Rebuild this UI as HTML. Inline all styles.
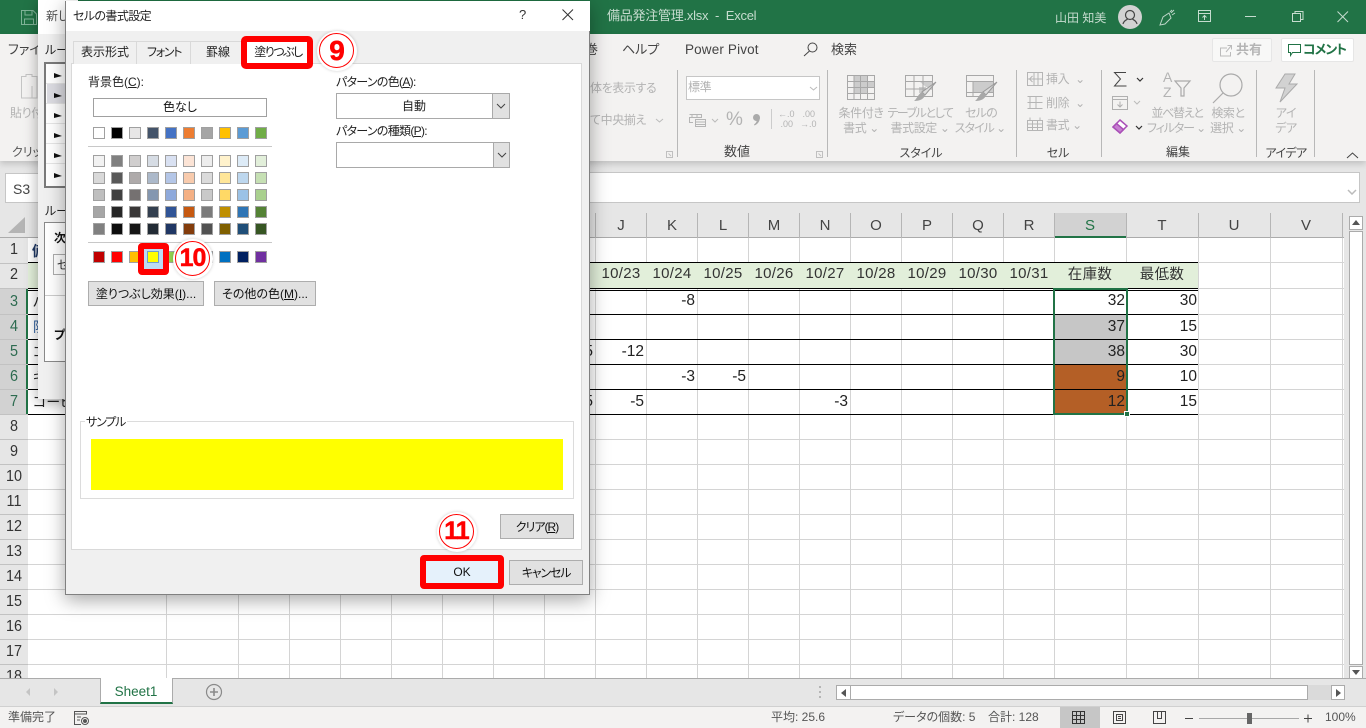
<!DOCTYPE html>
<html lang="ja"><head><meta charset="utf-8"><title>Excel</title>
<style>
html,body{margin:0;padding:0}
body{width:1366px;height:728px;overflow:hidden;position:relative;background:#e6e6e6;font-family:"Liberation Sans","Noto Sans CJK JP",sans-serif;font-feature-settings:"palt";color:#222}
div,svg,span{position:absolute}
.t{position:absolute;line-height:20px;white-space:nowrap;font-size:12px}
.c{transform:translateX(-50%)}
.g{color:#b3b3b3;letter-spacing:-.4px}
.l{color:#444}
.v{font-size:15.5px;color:#222;text-align:right;width:40px}
.h{font-size:15px;color:#333;transform:translateX(-50%);letter-spacing:.3px}
.n{font-size:16px;color:#333;transform:translateX(-50%) scaleX(.9)}
.cl{font-size:15px;color:#444;transform:translateX(-50%)}
.btn{background:#e1e1e1;border:1px solid #adadad;box-sizing:border-box;text-align:center;font-size:12px;color:#111}
.sw{left:93px;display:flex;height:12px}
.sw i{display:block;width:12px;height:12px;box-sizing:border-box;border:1px solid #a0a0a0;margin-right:6px;flex:none}
.circ{width:40px;height:40px;border-radius:50%;background:#fff;box-shadow:0 0 3px rgba(0,0,0,.2)}
.circ span{left:2px;top:2px;width:33px;height:33px;border:1.5px solid #f00;border-radius:50%;text-align:center;color:#f00;font-weight:bold;font-size:26px;line-height:33px;-webkit-text-stroke:.5px #f00;letter-spacing:-1px}
.sep{width:1px;background:#b8b8b8;top:70px;height:87px}
</style></head><body>

<!-- title bar -->
<div style="left:0;top:0;width:1366px;height:34px;background:#217346"></div>
<svg style="left:20px;top:9px" width="18" height="17" fill="none" stroke="#7fb397"><path d="M1.500 1.500H13L16.500 5V15.500H1.500Z M5 1.500V6H12V1.500 M4.500 15.500V10H13.500V15.500"/></svg>
<span class="t" style="left:607px;top:6px;color:#c6dccf;font-size:13px;letter-spacing:-.25px">備品発注管理.xlsx&nbsp; - &nbsp;Excel</span>
<span class="t" style="left:1055px;top:8px;color:#c6dccf;font-size:12px">山田 知美</span>
<svg style="left:1118px;top:5px" width="24" height="24" fill="none"><circle cx="12" cy="12" r="12" fill="#d2d2d2"/><circle cx="12" cy="10" r="4.500" stroke="#444" stroke-width="1.200"/><path d="M5 19C6 15 9 15 9.500 14M19 19C18 15 15 15 14.500 14" stroke="#444" stroke-width="1.200"/></svg>
<svg style="left:1159px;top:9px" width="17" height="18" fill="none" stroke="#bcd5c7"><path d="M1 16L4 8 10 4 12 9 6 15 1 16ZM11 3L13 1M13 6L16 4M12 4L15 1"/></svg>
<svg style="left:1198px;top:9px" width="14" height="14" fill="none" stroke="#c6dccf"><path d="M.5 1.500H12.500V12.500H.5ZM.5 4.500H12.500M6.500 11V6.500M4.500 8.500L6.500 6.500 8.500 8.500"/></svg>
<svg style="left:1245px;top:16px" width="12" height="2"><path d="M0 .5H11" stroke="#c6dccf"/></svg>
<svg style="left:1292px;top:11px" width="12" height="12" fill="none" stroke="#c6dccf"><path d="M.5 2.500H8.500V10.500H.5ZM3 2.500V.5H11V8.500H8.500"/></svg>
<svg style="left:1337px;top:11px" width="12" height="12" fill="none" stroke="#c6dccf"><path d="M.5 .5L11 11M11 .5L.5 11"/></svg>

<!-- ribbon -->
<div style="left:0;top:34px;width:1366px;height:127px;background:#f3f2f1;box-shadow:0 3px 6px rgba(0,0,0,.16)"></div>
<span class="t l" style="left:8px;top:40px;font-size:13px">ファイル</span>
<span class="t l" style="left:585px;top:40px;font-size:13px">巻</span>
<span class="t l" style="left:622px;top:40px;font-size:13px">ヘルプ</span>
<span class="t l" style="left:685px;top:40px;font-size:13.500px;letter-spacing:.15px">Power Pivot</span>
<svg style="left:803px;top:42px" width="15" height="15" fill="none" stroke="#444"><circle cx="9.500" cy="5.500" r="4.500"/><path d="M6.500 9L1 14"/></svg>
<span class="t l" style="left:831px;top:40px;font-size:13px">検索</span>
<div style="left:1212px;top:38px;width:60px;height:24px;box-sizing:border-box;background:#f8f8f7;border:1px solid #e6e6e6;border-radius:2px"></div>
<svg style="left:1219px;top:44px" width="14" height="13" fill="none" stroke="#bbb"><path d="M8 4H1.500V12H11.500V8M7 8L12 2M8.500 1.500H12.500V5.500"/></svg>
<span class="t" style="left:1236px;top:40px;color:#b5b5b5;font-size:13px;font-weight:bold">共有</span>
<div style="left:1281px;top:38px;width:73px;height:24px;box-sizing:border-box;background:#fff;border:1px solid #e6e6e6;border-radius:2px"></div>
<svg style="left:1288px;top:44px" width="14" height="13" fill="none" stroke="#217346"><path d="M.5 .5H12.500V8.500H4.500L2.500 11.500V8.500H.5Z"/></svg>
<span class="t" style="left:1303px;top:40px;color:#217346;font-size:13px;font-weight:bold;letter-spacing:-1px">コメント</span>

<!-- ribbon contents -->
<svg style="left:20px;top:72px" width="20" height="30" fill="none" stroke="#c4c4c4"><path d="M1.500 4.500H6V2.500H12V4.500H17V26H1.500ZM12 14V26"/></svg>
<span class="t g" style="left:10px;top:103px">貼り付け</span>
<span class="t" style="left:12px;top:142px;color:#555">クリップボード</span>
<span class="t g" style="left:590px;top:78px">体を表示する</span>
<span class="t g" style="left:590px;top:110px">て中央揃え</span>
<svg style="left:655px;top:118px" width="9" height="5" fill="none" stroke="#bbb"><path d="M1 1L4.500 4 8 1"/></svg>
<svg style="left:666px;top:151px" width="7" height="7" fill="none" stroke="#c0c0c0"><path d="M.5 .5H6.500V6.500H.5ZM2.500 2.500L5 5"/></svg>
<div class="sep" style="left:677px"></div>
<div style="left:686px;top:76px;width:134px;height:24px;box-sizing:border-box;background:#fff;border:1px solid #c6c6c6"></div>
<span class="t g" style="left:688px;top:77px;font-size:12px">標準</span>
<svg style="left:809px;top:86px" width="9" height="5" fill="none" stroke="#bbb"><path d="M1 1L4.500 4 8 1"/></svg>
<svg style="left:689px;top:113px" width="18" height="15" fill="none" stroke="#b5b5b5"><path d="M.5 1.500H12.500V4.500H.5V9.500H4M6.500 6.500H16.500V13.500H6.500ZM6.500 9H16.500M6.500 11.500H16.500M3 2V4M8 2V4"/></svg>
<svg style="left:711px;top:118px" width="8" height="5" fill="none" stroke="#bbb"><path d="M1 1L4 4 7 1"/></svg>
<span class="t g" style="left:726px;top:110px;font-size:19px;letter-spacing:0">%</span>
<svg style="left:752px;top:113px" width="9" height="14" fill="#aaa"><circle cx="4.500" cy="4.500" r="3.500"/><path d="M7.800 4.500C8 8 6 11 2.500 12.500L2 11.500C4 10 5 8.500 4.500 7Z"/></svg>
<div style="left:771px;top:109px;width:1px;height:20px;background:#ccc"></div>
<span class="t g" style="left:778px;top:109px;font-size:9px;line-height:10px;letter-spacing:0">←.0<br>&nbsp;.00</span>
<span class="t g" style="left:800px;top:109px;font-size:9px;line-height:10px;letter-spacing:0">&nbsp;.00<br>→.0</span>
<span class="t c" style="left:737px;top:142px;color:#444;font-size:13px">数値</span>
<svg style="left:816px;top:151px" width="7" height="7" fill="none" stroke="#c0c0c0"><path d="M.5 .5H6.500V6.500H.5ZM2.500 2.500L5 5"/></svg>
<div class="sep" style="left:827px"></div>

<svg style="left:847px;top:75px" width="29" height="27" fill="#ccc" stroke="#a8a8a8"><path d="M.5 .5H27.500V24.500H.5Z" fill="#f3f2f1"/><path d="M7 1H20V7H27V13H7ZM7 13H20V18H7Z" stroke="none"/><path d="M.5 6.500H27.500M.5 12.500H27.500M.5 18.500H27.500M7 1V24M13.500 1V24M20.500 1V24" fill="none"/></svg>
<svg style="left:905px;top:74px" width="33" height="29" fill="none" stroke="#a8a8a8"><path d="M14 7H27V13H14V19H21V13Z" fill="#ccc" stroke="none"/><path d="M.5 1.500H27.500V22.500H.5ZM.5 7.500H27.500M.5 15H27.500M9 2V22M18 2V22"/><path d="M31 8L20 21 17 18Z" fill="#ddd" stroke="#999"/><path d="M17 18L20 21C19 25 15 27 9 27 12 25 13 20 17 18Z" fill="#a8a8a8" stroke="none"/></svg>
<svg style="left:966px;top:74px" width="33" height="29" fill="none" stroke="#a8a8a8"><path d="M7 7H27V19H7Z" fill="#ccc" stroke="none"/><path d="M.5 1.500H27.500V22.500H.5ZM.5 7.500H27.500M.5 18.500H27.500M7 8V22"/><path d="M31 8L20 21 17 18Z" fill="#ddd" stroke="#999"/><path d="M17 18L20 21C19 25 15 27 9 27 12 25 13 20 17 18Z" fill="#a8a8a8" stroke="none"/></svg>
<span class="t g c" style="left:861px;top:103px">条件付き</span>
<span class="t g c" style="left:861px;top:118px">書式 ⌄</span>
<span class="t g c" style="left:920px;top:103px;letter-spacing:-1.400px">テーブルとして</span>
<span class="t g c" style="left:920px;top:118px">書式設定 ⌄</span>
<span class="t g c" style="left:981px;top:103px;letter-spacing:-.8px">セルの</span>
<span class="t g c" style="left:980px;top:118px;letter-spacing:-1px">スタイル ⌄</span>
<span class="t c" style="left:921px;top:143px;color:#444">スタイル</span>
<div class="sep" style="left:1016px"></div>

<svg style="left:1027px;top:72px" width="17" height="15" fill="none" stroke="#b5b5b5"><path d="M.5 .5H15.500V13.500H.5ZM7 .5V13.500M11 .5V13.500M.5 7H15.500M5.500 4L2.500 7 5.500 10"/></svg>
<svg style="left:1027px;top:95px" width="17" height="15" fill="none" stroke="#b5b5b5"><path d="M.5 1.500H15.500M.5 13.500H15.500M3 1.500V13.500M9 1.500V13.500M.5 7.500H15.500"/></svg>
<svg style="left:1027px;top:117px" width="17" height="15" fill="none" stroke="#b5b5b5"><path d="M.5 3.500H15.500V13.500H.5ZM.5 7H15.500M.5 10.500H15.500M5.500 3.500V13.500M10.500 3.500V13.500M3 3.500V.5M13 3.500V.5"/></svg>
<span class="t g" style="left:1046px;top:69px">挿入 &nbsp;⌄</span>
<span class="t g" style="left:1046px;top:93px">削除 &nbsp;⌄</span>
<span class="t g" style="left:1046px;top:115px">書式 ⌄</span>
<span class="t c" style="left:1058px;top:143px;color:#444">セル</span>
<div class="sep" style="left:1101px"></div>

<svg style="left:1113px;top:71px" width="16" height="17" fill="none" stroke="#444"><path d="M13 1.500H1.500L7.500 8 1.500 15H13.500"/></svg>
<svg style="left:1136px;top:77px" width="8" height="5" fill="none" stroke="#333" stroke-width="1.200"><path d="M1 1L4 4 7 1"/></svg>
<svg style="left:1112px;top:96px" width="17" height="15" fill="none" stroke="#b0b0b0"><path d="M.5 .5H15.500V13.500H.5ZM.5 3.500H15.500M8 5.500V11M5.500 8.500L8 11 10.500 8.500"/></svg>
<svg style="left:1133px;top:100px" width="8" height="5" fill="none" stroke="#bbb"><path d="M1 1L4 4 7 1"/></svg>
<svg style="left:1112px;top:119px" width="17" height="17" fill="#fff" stroke="#a94fb7" stroke-width="1.500"><path d="M8 1L15 7 8 14 1 8Z"/><path d="M1 8L4.500 4.500 11.500 10.500 8 14Z" fill="#c77fd1"/></svg>
<svg style="left:1135px;top:125px" width="8" height="5" fill="none" stroke="#333" stroke-width="1.200"><path d="M1 1L4 4 7 1"/></svg>
<span class="t g" style="left:1163px;top:70px;font-size:14px;line-height:15px;letter-spacing:0">A<br>Z</span>
<svg style="left:1174px;top:80px" width="24" height="18" fill="none" stroke="#aaa" stroke-width="1.200"><path d="M1 1H16L10 8V16H7V8Z"/></svg>
<svg style="left:1212px;top:73px" width="32" height="31" fill="none" stroke="#aaa" stroke-width="1.200"><circle cx="19" cy="12" r="11"/><path d="M11 20L1 30"/></svg>
<span class="t g c" style="left:1177px;top:103px;letter-spacing:-1.300px">並べ替えと</span>
<span class="t g c" style="left:1176px;top:118px;letter-spacing:-1.100px">フィルター ⌄</span>
<span class="t g c" style="left:1228px;top:103px">検索と</span>
<span class="t g c" style="left:1228px;top:118px">選択 ⌄</span>
<span class="t c" style="left:1178px;top:142px;color:#444">編集</span>
<div class="sep" style="left:1256px"></div>
<svg style="left:1274px;top:73px" width="25" height="30" fill="#d2d2d2" stroke="#aaa"><path d="M11 1H21L15 11H23L6 29 11 15H2Z"/></svg>
<span class="t g c" style="left:1286px;top:103px">アイ</span>
<span class="t g c" style="left:1286px;top:118px">デア</span>
<span class="t c" style="left:1286px;top:143px;color:#444;letter-spacing:-.6px">アイデア</span>
<div class="sep" style="left:1314px"></div>
<svg style="left:1346px;top:152px" width="13" height="7" fill="none" stroke="#444"><path d="M1 6L6.500 1 12 6"/></svg>

<!-- formula bar -->
<div style="left:5px;top:173px;width:100px;height:30px;box-sizing:border-box;background:#fff;border:1px solid #c6c6c6"></div>
<span class="t" style="left:13px;top:179px;color:#444;font-size:14px">S3</span>
<div style="left:120px;top:172px;width:1240px;height:31px;box-sizing:border-box;background:#fff;border:1px solid #c6c6c6"></div>
<svg style="left:1347px;top:189px" width="10" height="6" fill="none" stroke="#bbb" stroke-width="1.500"><path d="M1 1L5 5 9 1"/></svg>

<!-- sheet -->
<div style="left:28px;top:238px;width:1316px;height:441px;background:#fff"></div>
<div style="left:0;top:213px;width:1344px;height:25px;background:#e6e6e6;border-bottom:1px solid #ababab;box-sizing:border-box"></div>
<div style="left:0;top:238px;width:28px;height:441px;background:#e6e6e6"></div>
<svg style="left:8px;top:217px" width="18" height="17"><path d="M17 0V16H0Z" fill="#b4b4b4"/></svg>
<div style="left:1054px;top:213px;width:73px;height:25px;background:#d2d2d2;border-bottom:2px solid #217346;box-sizing:border-box"></div>
<div style="left:0;top:289px;width:28px;height:126px;background:#d2d2d2;border-right:2px solid #217346;box-sizing:border-box"></div>
<svg style="left:0;top:213px" width="1344" height="466" fill="none">
<path stroke="#d4d4d4" d="M166.500 25V466M238.500 25V466M289.500 25V466M340.500 25V466M391.500 25V466M442.500 25V466M493.500 25V466M544.500 25V466M595.500 25V466M646.500 25V466M697.500 25V466M748.500 25V466M799.500 25V466M850.500 25V466M901.500 25V466M952.500 25V466M1003.500 25V466M1054.500 25V466M1126.500 25V466M1198.500 25V466M1270.500 25V466M1342.500 25V466M28 226.500H1344M28 251.500H1344M28 276.500H1344M28 301.500H1344M28 326.500H1344M28 351.500H1344M28 376.500H1344M28 401.500H1344M28 426.500H1344M28 451.500H1344M1198 49.500H1344M1198 75.500H1344M1198 101.500H1344M1198 126.500H1344M1198 151.500H1344M1198 176.500H1344M1198 201.500H1344"/>
<path stroke="#b5b5b5" d="M646.500 0V25M697.500 0V25M748.500 0V25M799.500 0V25M850.500 0V25M901.500 0V25M952.500 0V25M1003.500 0V25M1054.500 0V25M1126.500 0V25M1198.500 0V25M1270.500 0V25M1342.500 0V25M595.500 0V25"/>
<path stroke="#c2c2c2" d="M0 50.500H28M0 75.500H28M0 101.500H28M0 126.500H28M0 151.500H28M0 176.500H28M0 201.500H28M0 226.500H28M0 251.500H28M0 276.500H28M0 301.500H28M0 326.500H28M0 351.500H28M0 376.500H28M0 401.500H28M0 426.500H28M0 451.500H28"/>
</svg>
<div style="left:28px;top:263px;width:1170px;height:25px;background:#e2efda"></div>
<div style="left:1055px;top:315px;width:71px;height:49px;background:#c6c6c6"></div>
<div style="left:1055px;top:365px;width:71px;height:49px;background:#b45f26"></div>
<svg style="left:0;top:213px" width="1344" height="466" fill="none">
<path stroke="#000" d="M28 49.500H1198M28 75.500H1198M28 77.500H1198M28 101.500H1198M28 126.500H1198M28 151.500H1198M28 176.500H1198M28 201.500H1198"/>
</svg>
<div style="left:1053px;top:288px;width:75px;height:127px;box-sizing:border-box;border:2px solid #217346"></div>
<div style="left:1124px;top:411px;background:#217346;border:1px solid #fff;box-sizing:content-box;width:4px;height:4px"></div>

<span class="t cl" style="left:621px;top:216px">J</span>
<span class="t cl" style="left:672px;top:216px">K</span>
<span class="t cl" style="left:723px;top:216px">L</span>
<span class="t cl" style="left:774px;top:216px">M</span>
<span class="t cl" style="left:825px;top:216px">N</span>
<span class="t cl" style="left:876px;top:216px">O</span>
<span class="t cl" style="left:927px;top:216px">P</span>
<span class="t cl" style="left:978px;top:216px">Q</span>
<span class="t cl" style="left:1029px;top:216px">R</span>
<span class="t cl" style="left:1090px;top:216px;color:#217346">S</span>
<span class="t cl" style="left:1162px;top:216px">T</span>
<span class="t cl" style="left:1234px;top:216px">U</span>
<span class="t cl" style="left:1306px;top:216px">V</span>

<span class="t n" style="left:14px;top:240px">1</span>
<span class="t n" style="left:14px;top:265px">2</span>
<span class="t n" style="left:14px;top:292px;color:#2d6b50">3</span>
<span class="t n" style="left:14px;top:317px;color:#2d6b50">4</span>
<span class="t n" style="left:14px;top:342px;color:#2d6b50">5</span>
<span class="t n" style="left:14px;top:367px;color:#2d6b50">6</span>
<span class="t n" style="left:14px;top:392px;color:#2d6b50">7</span>
<span class="t n" style="left:14px;top:417px">8</span>
<span class="t n" style="left:14px;top:442px">9</span>
<span class="t n" style="left:14px;top:467px">10</span>
<span class="t n" style="left:14px;top:492px">11</span>
<span class="t n" style="left:14px;top:517px">12</span>
<span class="t n" style="left:14px;top:542px">13</span>
<span class="t n" style="left:14px;top:567px">14</span>
<span class="t n" style="left:14px;top:592px">15</span>
<span class="t n" style="left:14px;top:617px">16</span>
<span class="t n" style="left:14px;top:642px">17</span>
<div style="left:0;top:664px;width:28px;height:15px;overflow:hidden"><span class="t n" style="left:14px;top:3px">18</span></div>

<span class="t" style="left:32px;top:241px;font-size:14px;font-weight:bold;color:#1f3864">備</span>
<span class="t" style="left:33px;top:292px;font-size:14px">ハ</span>
<span class="t" style="left:33px;top:317px;font-size:14px;color:#2f5f9e">防</span>
<span class="t" style="left:33px;top:342px;font-size:14px">コ</span>
<span class="t" style="left:33px;top:367px;font-size:14px">キ</span>
<span class="t" style="left:33px;top:392px;font-size:14px">コーヒー</span>

<span class="t h" style="left:621px;top:264px">10/23</span>
<span class="t h" style="left:672px;top:264px">10/24</span>
<span class="t h" style="left:723px;top:264px">10/25</span>
<span class="t h" style="left:774px;top:264px">10/26</span>
<span class="t h" style="left:825px;top:264px">10/27</span>
<span class="t h" style="left:876px;top:264px">10/28</span>
<span class="t h" style="left:927px;top:264px">10/29</span>
<span class="t h" style="left:978px;top:264px">10/30</span>
<span class="t h" style="left:1029px;top:264px">10/31</span>
<span class="t h" style="left:1090px;top:265px;font-size:14.500px">在庫数</span>
<span class="t h" style="left:1162px;top:265px;font-size:14.500px">最低数</span>

<span class="t v" style="left:655px;top:291px">-8</span>
<span class="t v" style="left:1085px;top:291px">32</span>
<span class="t v" style="left:1157px;top:291px">30</span>
<span class="t v" style="left:1085px;top:317px">37</span>
<span class="t v" style="left:1157px;top:317px">15</span>
<span class="t v" style="left:553px;top:342px">5</span>
<span class="t v" style="left:604px;top:342px">-12</span>
<span class="t v" style="left:1085px;top:342px">38</span>
<span class="t v" style="left:1157px;top:342px">30</span>
<span class="t v" style="left:655px;top:367px">-3</span>
<span class="t v" style="left:706px;top:367px">-5</span>
<span class="t v" style="left:1085px;top:367px">9</span>
<span class="t v" style="left:1157px;top:367px">10</span>
<span class="t v" style="left:553px;top:392px">5</span>
<span class="t v" style="left:604px;top:392px">-5</span>
<span class="t v" style="left:808px;top:392px">-3</span>
<span class="t v" style="left:1085px;top:392px">12</span>
<span class="t v" style="left:1157px;top:392px">15</span>

<!-- v scrollbar -->
<div style="left:1349px;top:216px;width:14px;height:14px;box-sizing:border-box;background:#fff;border:1px solid #ababab"></div>
<svg style="left:1352px;top:220px" width="8" height="5"><path d="M4 0L8 5H0Z" fill="#555"/></svg>
<div style="left:1349px;top:231px;width:14px;height:434px;box-sizing:border-box;background:#fff;border:1px solid #ababab"></div>
<div style="left:1349px;top:666px;width:14px;height:13px;box-sizing:border-box;background:#fff;border:1px solid #ababab"></div>
<svg style="left:1352px;top:670px" width="8" height="5"><path d="M0 0H8L4 5Z" fill="#555"/></svg>

<!-- sheet tabs -->
<div style="left:0;top:678px;width:1366px;height:29px;background:#e6e6e6;border-top:1px solid #ababab;border-bottom:1px solid #d0d0d0;box-sizing:border-box"></div>
<svg style="left:26px;top:687px" width="36" height="10" fill="#c4c4c4"><path d="M4 1V9L0 5ZM28 1V9L32 5Z"/></svg>
<div style="left:100px;top:678px;width:73px;height:26px;box-sizing:border-box;background:#fff;border:1px solid #ababab;border-top:0;border-bottom:2px solid #217346"></div>
<span class="t c" style="left:136px;top:682px;color:#217346;font-size:13.500px">Sheet1</span>
<svg style="left:205px;top:683px" width="18" height="18" fill="none" stroke="#8a8a8a"><circle cx="9" cy="9" r="7.500" stroke-width="1.200"/><path d="M9 5V13M5 9H13" stroke-width="1.600"/></svg>
<svg style="left:818px;top:686px" width="4" height="13" fill="#b5b5b5"><path d="M1 0h2v2H1zM1 5h2v2H1zM1 10h2v2H1z"/></svg>
<div style="left:836px;top:685px;width:472px;height:15px;box-sizing:border-box;background:#fff;border:1px solid #ababab"></div>
<div style="left:1308px;top:685px;width:24px;height:15px;background:#dadada"></div>
<div style="left:836px;top:685px;width:15px;height:15px;box-sizing:border-box;background:#fff;border:1px solid #ababab"></div>
<svg style="left:841px;top:689px" width="5" height="8"><path d="M5 0V8L0 4Z" fill="#555"/></svg>
<div style="left:1331px;top:685px;width:14px;height:15px;box-sizing:border-box;background:#fff;border:1px solid #ababab"></div>
<svg style="left:1336px;top:689px" width="5" height="8"><path d="M0 0V8L5 4Z" fill="#555"/></svg>

<!-- status bar -->
<div style="left:0;top:707px;width:1366px;height:21px;background:#f3f2f1"></div>
<span class="t" style="left:8px;top:707px;color:#555">準備完了</span>
<svg style="left:74px;top:711px" width="16" height="15" fill="none" stroke="#555"><path d="M.5 .5H12.500V3H.5ZM.5 3V13.500H7M3 6H7M3 9H6"/><circle cx="11" cy="10" r="3.500"/><circle cx="11" cy="10" r="1.500" fill="#555"/></svg>
<span class="t" style="left:771px;top:707px;color:#555">平均: 25.6</span>
<span class="t" style="left:893px;top:707px;color:#555">データの個数: 5</span>
<span class="t" style="left:988px;top:707px;color:#555">合計: 128</span>
<div style="left:1060px;top:707px;width:40px;height:21px;background:#c6c6c6"></div>
<svg style="left:1072px;top:711px" width="14" height="14" fill="none" stroke="#333"><path d="M.5 .5H12.500V12.500H.5ZM4.500 .5V12.500M8.500 .5V12.500M.5 4.500H12.500M.5 8.500H12.500"/></svg>
<svg style="left:1113px;top:711px" width="14" height="14" fill="none" stroke="#444"><path d="M.5 .5H12.500V12.500H.5ZM3.500 3.500H9.500V9.500H3.500ZM5 5.500H8M5 7.500H8"/></svg>
<svg style="left:1153px;top:711px" width="14" height="14" fill="none" stroke="#444"><path d="M.5 .5H12.500V12.500H.5ZM4.500 .5V7.500H8.500V.5"/></svg>
<svg style="left:1180px;top:711px" width="135" height="14"><path d="M5 7.500H13" stroke="#444"/><path d="M19 7.500H119" stroke="#a8a8a8"/><rect x="67" y="2" width="5" height="11" fill="#666"/><path d="M124 7.500H132M128 3.500V11.500" stroke="#444"/></svg>
<span class="t" style="left:1325px;top:707px;color:#555">100%</span>

<!-- back dialog -->
<div style="left:38px;top:0;width:40px;height:399px;background:#f0f0f0;box-shadow:0 3px 14px rgba(0,0,0,.35)"></div>
<div style="left:38px;top:0;width:40px;height:34px;background:#fff"></div>
<span class="t" style="left:46px;top:6px;color:#555">新しい</span>
<span class="t" style="left:45px;top:40px;color:#222">ルール</span>
<div style="left:44px;top:62px;width:40px;height:126px;box-sizing:border-box;background:#fff;border:2px solid #7a7a7a"></div>
<div style="left:47px;top:84px;width:30px;height:20px;background:#dcdce2"></div>
<svg style="left:46px;top:64px" width="20" height="122" fill="#111" stroke="#e6e6e6"><path stroke="none" d="M8 9L16 12 8 14ZM8 29L16 32 8 34ZM8 49L16 52 8 54ZM8 69L16 72 8 74ZM8 89L16 92 8 94ZM8 109L16 112 8 114Z"/><path d="M0 19.500H20M0 39.500H20M0 59.500H20M0 79.500H20M0 99.500H20"/></svg>
<span class="t" style="left:45px;top:201px">ルール</span>
<div style="left:44px;top:222px;width:40px;height:140px;box-sizing:border-box;background:#fff;border:1px solid #8a8a8a"></div>
<span class="t" style="left:54px;top:228px;font-weight:bold;color:#111">次</span>
<div style="left:53px;top:254px;width:30px;height:21px;box-sizing:border-box;border:1px solid #adadad;background:#fff"></div>
<span class="t" style="left:57px;top:255px;color:#333">セル</span>
<div style="left:45px;top:295px;width:30px;height:1px;background:#ccc"></div>
<span class="t" style="left:54px;top:325px;font-weight:bold;color:#111">プレ</span>

<!-- main dialog -->
<div style="left:65px;top:1px;width:525px;height:594px;box-sizing:border-box;background:#f0f0f0;border:1px solid #808080;border-top:0;box-shadow:0 5px 18px rgba(0,0,0,.35)"></div>
<div style="left:66px;top:1px;width:524px;height:30px;background:#fff"></div>
<span class="t" style="left:73px;top:6px;color:#222;font-size:12px;letter-spacing:-.6px">セルの書式設定</span>
<span class="t" style="left:519px;top:5px;color:#333;font-size:13px">?</span>
<svg style="left:562px;top:9px" width="12" height="12" fill="none" stroke="#333"><path d="M.5 .5L11 11M11 .5L.5 11"/></svg>

<div style="left:71px;top:63px;width:511px;height:487px;box-sizing:border-box;background:#fff;border:1px solid #d9d9d9"></div>
<div style="left:73px;top:41px;width:64px;height:23px;box-sizing:border-box;background:#f0f0f0;border:1px solid #d9d9d9;border-bottom:0"></div>
<div style="left:136px;top:41px;width:55px;height:23px;box-sizing:border-box;background:#f0f0f0;border:1px solid #d9d9d9;border-bottom:0"></div>
<div style="left:190px;top:41px;width:52px;height:23px;box-sizing:border-box;background:#f0f0f0;border:1px solid #d9d9d9;border-bottom:0"></div>
<span class="t c" style="left:105px;top:42px">表示形式</span>
<span class="t c" style="left:164px;top:42px;letter-spacing:-1.300px">フォント</span>
<span class="t c" style="left:218px;top:42px">罫線</span>
<div style="left:241px;top:36px;width:72px;height:33px;box-sizing:border-box;background:#fff;border:6px solid #f00;border-radius:5px"></div>
<span class="t c" style="left:278px;top:42px;letter-spacing:-1.500px">塗りつぶし</span>
<div class="circ" style="left:317px;top:31px"><span style="font-size:28px">9</span></div>

<span class="t" style="left:88px;top:72px">背景色(<u>C</u>):</span>
<div class="btn" style="left:93px;top:98px;width:174px;height:19px;background:#fff;line-height:17px;border-color:#a0a0a0">色なし</div>
<div class="sw" style="top:127px"><i style="background:#ffffff"></i><i style="background:#000000"></i><i style="background:#e7e6e6"></i><i style="background:#44546a"></i><i style="background:#4472c4"></i><i style="background:#ed7d31"></i><i style="background:#a5a5a5"></i><i style="background:#ffc000"></i><i style="background:#5b9bd5"></i><i style="background:#70ad47"></i></div>
<div style="left:88px;top:146px;width:184px;height:1px;background:#c8c8c8"></div>
<div class="sw" style="top:155px"><i style="background:#f2f2f2"></i><i style="background:#808080"></i><i style="background:#d0cece"></i><i style="background:#d6dce4"></i><i style="background:#d9e1f2"></i><i style="background:#fce4d6"></i><i style="background:#ededed"></i><i style="background:#fff2cc"></i><i style="background:#ddebf7"></i><i style="background:#e2efda"></i></div>
<div class="sw" style="top:172px"><i style="background:#d9d9d9"></i><i style="background:#595959"></i><i style="background:#aeaaaa"></i><i style="background:#acb9ca"></i><i style="background:#b4c6e7"></i><i style="background:#f8cbad"></i><i style="background:#dbdbdb"></i><i style="background:#ffe699"></i><i style="background:#bdd7ee"></i><i style="background:#c6e0b4"></i></div>
<div class="sw" style="top:189px"><i style="background:#bfbfbf"></i><i style="background:#404040"></i><i style="background:#757171"></i><i style="background:#8497b0"></i><i style="background:#8ea9db"></i><i style="background:#f4b084"></i><i style="background:#c9c9c9"></i><i style="background:#ffd966"></i><i style="background:#9bc2e6"></i><i style="background:#a9d08e"></i></div>
<div class="sw" style="top:206px"><i style="background:#a6a6a6"></i><i style="background:#262626"></i><i style="background:#3a3838"></i><i style="background:#333f4f"></i><i style="background:#305496"></i><i style="background:#c65911"></i><i style="background:#7b7b7b"></i><i style="background:#bf8f00"></i><i style="background:#2f75b5"></i><i style="background:#548235"></i></div>
<div class="sw" style="top:223px"><i style="background:#808080"></i><i style="background:#0d0d0d"></i><i style="background:#161616"></i><i style="background:#222b35"></i><i style="background:#203764"></i><i style="background:#833c0c"></i><i style="background:#525252"></i><i style="background:#806000"></i><i style="background:#1f4e78"></i><i style="background:#375623"></i></div>
<div style="left:88px;top:242px;width:184px;height:1px;background:#c8c8c8"></div>
<div class="sw" style="top:251px"><i style="background:#c00000"></i><i style="background:#ff0000"></i><i style="background:#ffc000"></i><i style="background:#ffff00"></i><i style="background:#92d050"></i><i style="background:#00b050"></i><i style="background:#00b0f0"></i><i style="background:#0070c0"></i><i style="background:#002060"></i><i style="background:#7030a0"></i></div>
<div style="left:138px;top:243px;width:31px;height:32px;box-sizing:border-box;background:#bcdcf4;border:6px solid #f00;border-radius:4px"></div>
<div style="left:147px;top:251px;width:12px;height:12px;background:#ff0;border:1px solid #6f9fc8;box-sizing:border-box"></div>
<div class="circ" style="left:173px;top:239px"><span style="font-size:25px;letter-spacing:-1px">10</span></div>
<div class="btn" style="left:88px;top:281px;width:116px;height:25px;line-height:24px">塗りつぶし効果(<u>I</u>)...</div>
<div class="btn" style="left:214px;top:281px;width:102px;height:25px;line-height:24px">その他の色(<u>M</u>)...</div>

<span class="t" style="left:336px;top:72px;letter-spacing:-.7px">パターンの色(<u>A</u>):</span>
<div style="left:336px;top:93px;width:174px;height:26px;box-sizing:border-box;background:#fff;border:1px solid #a9a9a9"></div>
<span class="t c" style="left:414px;top:96px">自動</span>
<div style="left:492px;top:93px;width:18px;height:26px;box-sizing:border-box;background:#e1e1e1;border:1.500px solid #a9a9a9"></div>
<svg style="left:496px;top:103px" width="10" height="6" fill="none" stroke="#444"><path d="M1 1L5 5 9 1"/></svg>
<span class="t" style="left:336px;top:121px;letter-spacing:-.7px">パターンの種類(<u>P</u>):</span>
<div style="left:336px;top:142px;width:174px;height:26px;box-sizing:border-box;background:#fff;border:1px solid #a9a9a9"></div>
<div style="left:493px;top:142px;width:17px;height:26px;box-sizing:border-box;background:#e1e1e1;border:1.500px solid #a9a9a9"></div>
<svg style="left:497px;top:152px" width="10" height="6" fill="none" stroke="#444"><path d="M1 1L5 5 9 1"/></svg>

<div style="left:80px;top:421px;width:494px;height:78px;box-sizing:border-box;border:1px solid #dcdcdc"></div>
<span class="t" style="left:85px;top:412px;background:#fff;padding:0 2px 0 1px;line-height:20px;height:18px;overflow:hidden;letter-spacing:-1.200px">サンプル</span>
<div style="left:91px;top:439px;width:472px;height:51px;background:#ff0"></div>
<div class="btn" style="left:500px;top:514px;width:74px;height:25px;line-height:24px;letter-spacing:-1px">クリア(<u>R</u>)</div>
<div style="left:420px;top:555px;width:84px;height:34px;box-sizing:border-box;background:#e5f1fb;border:6px solid #f00;border-radius:4px;text-align:center;line-height:22px;font-size:12px;color:#111">OK</div>
<div class="btn" style="left:509px;top:560px;width:74px;height:25px;line-height:24px;letter-spacing:-1.200px">キャンセル</div>
<div class="circ" style="left:437px;top:512px"><span style="font-size:25px;letter-spacing:-1px">11</span></div>
</body></html>
